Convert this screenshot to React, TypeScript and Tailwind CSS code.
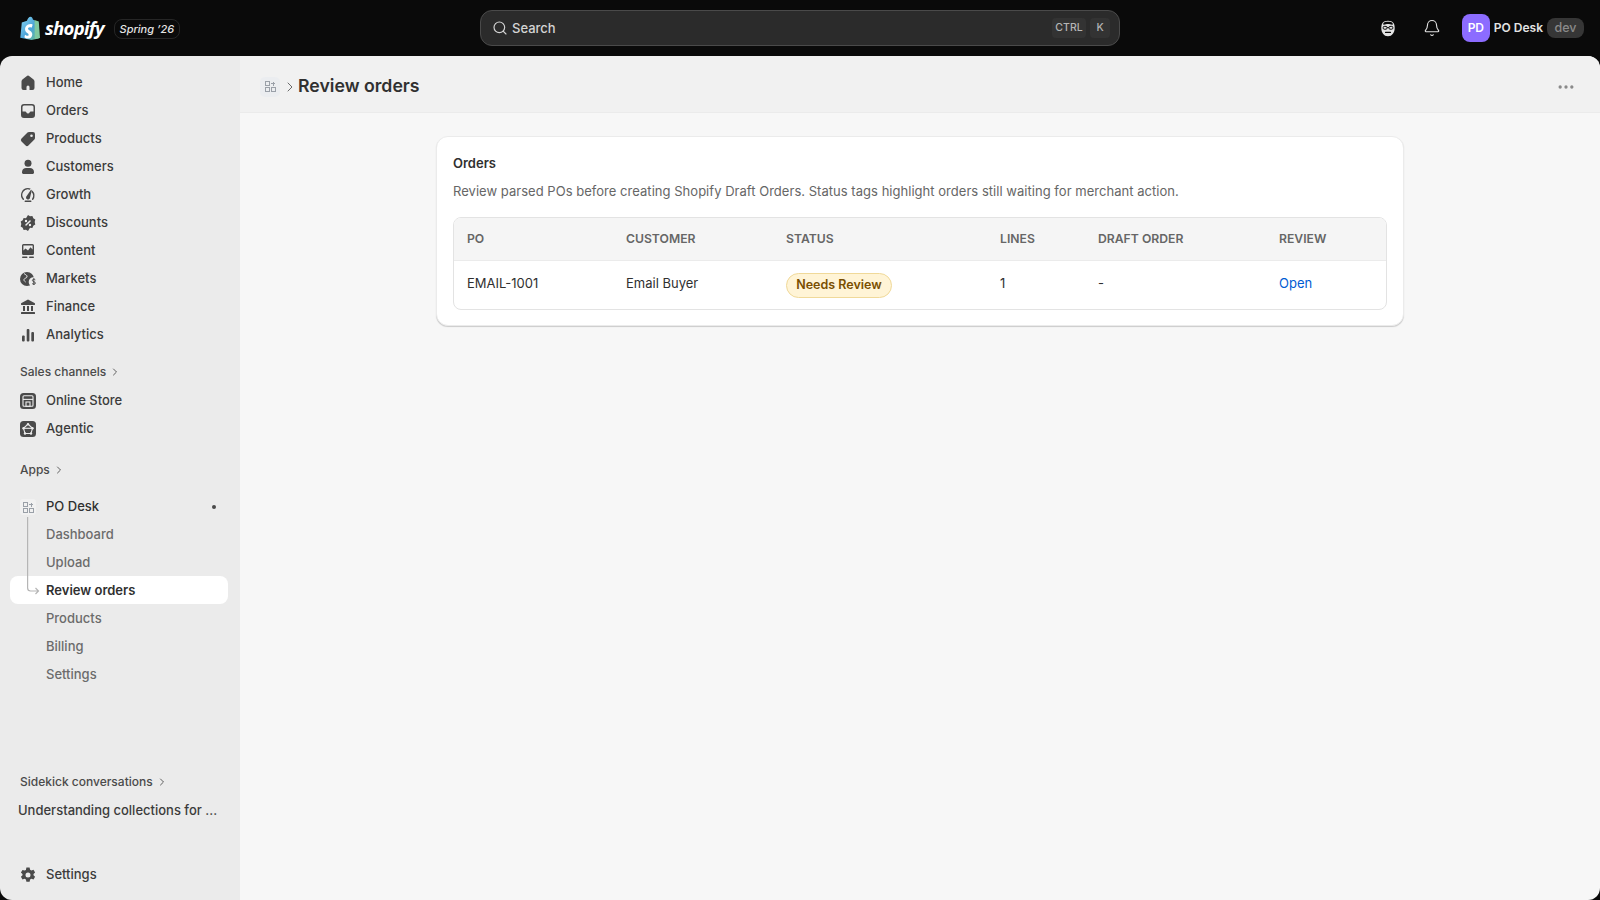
import { Bell, ChevronRight, Ellipsis, Search } from "lucide-react";
import type { ReactNode } from "react";

const Svg = ({ children }: { children: ReactNode }) => (
  <svg viewBox="0 0 20 20" className="w-5 h-5 fill-[#4a4a4a]">
    {children}
  </svg>
);

const icons: Record<string, ReactNode> = {
  home: <path d="M8.600 3.200a2.200 2.200 0 0 1 2.800 0l4.200 3.400c.6.500.9 1.200.9 1.900v6.500a2 2 0 0 1-2 2H11.500V14a1.500 1.500 0 0 0-3 0v3H5.500a2 2 0 0 1-2-2V8.500c0-.7.3-1.400.9-1.900z" />,
  orders: (
    <path
      fillRule="evenodd"
      d="M6 3h8a3 3 0 0 1 3 3v8a3 3 0 0 1-3 3H6a3 3 0 0 1-3-3V6a3 3 0 0 1 3-3m-1.500 7.500V6A1.500 1.500 0 0 1 6 4.500h8A1.500 1.500 0 0 1 15.500 6v4.500h-2.700c-.5 0-.9.3-1.100.7a1.800 1.800 0 0 1-3.400 0c-.2-.4-.6-.7-1.100-.7z"
    />
  ),
  products: (
    <path
      fillRule="evenodd"
      d="M11 3h4a2 2 0 0 1 2 2v4c0 .6-.2 1.100-.6 1.500l-6 6a2 2 0 0 1-2.800 0l-4.100-4.100a2 2 0 0 1 0-2.800l6-6C9.900 3.200 10.400 3 11 3m2.500 5a1.300 1.300 0 1 0 0-2.600 1.300 1.300 0 0 0 0 2.600"
    />
  ),
  customers: (
    <>
      <circle cx="10" cy="6.200" r="3.500" />
      <path d="M4 15c0-2.500 2-4 4-4h4c2 0 4 1.500 4 4v.5c0 .8-.7 1.500-1.500 1.500h-9C4.700 17 4 16.300 4 15.500z" />
    </>
  ),
  growth: (
    <>
      <path d="M10 3a7 7 0 0 0-5.200 11.700.75.75 0 0 0 1.100-1A5.500 5.500 0 0 1 11.900 4.800l.7-1.300A7 7 0 0 0 10 3m4.300 2.500-.8 1.400a5.500 5.500 0 0 1 .6 6.800.75.75 0 0 0 1.100 1A7 7 0 0 0 14.300 5.500" />
      <path d="M13.800 5.300a.7.7 0 0 0-1.200-.1L8.700 11a2 2 0 1 0 3.300 1.800z" />
      <rect x="6.500" y="15.500" width="7" height="1.500" rx=".75" />
    </>
  ),
  discounts: (
    <path
      fillRule="evenodd"
      d="M10 2l2 1.300 2.400-.2.9 2.200 2 1.300-.6 2.400.6 2.400-2 1.300-.9 2.200-2.400-.2L10 18l-2-1.300-2.400.2-.9-2.200-2-1.300.6-2.400-.6-2.400 2-1.300.9-2.200 2.400.2zM8 6.800a1.200 1.200 0 1 0 0 2.400 1.200 1.200 0 0 0 0-2.400m4 4a1.200 1.200 0 1 0 0 2.400 1.200 1.200 0 0 0 0-2.400m.6-3.400a.8.8 0 0 0-1.100 0l-4.100 4.100a.8.8 0 0 0 1.100 1.100l4.100-4.100a.8.8 0 0 0 0-1.100"
    />
  ),
  content: (
    <>
      <path
        fillRule="evenodd"
        d="M5.500 3h9A1.500 1.500 0 0 1 16 4.500v8a1.500 1.500 0 0 1-1.500 1.500h-9A1.500 1.500 0 0 1 4 12.500v-8A1.500 1.500 0 0 1 5.500 3m-.1 1.400v5l2.100-1.900 2.500 2 2.500-3.200 2.100 2.100v-4z"
      />
      <rect x="4" y="15.500" width="5.500" height="1.500" rx=".75" />
      <rect x="11" y="15.500" width="5" height="1.500" rx=".75" />
    </>
  ),
  markets: (
    <>
      <circle cx="9" cy="10" r="7" />
      <circle cx="15.500" cy="13" r="4.800" fill="#ebebeb" />
      <path d="M6 4.500c1.500 1.500 3.500 1.500 3 3.500-.3 1.200-2.500 1-3 2.500-.3 1 .8 2 1.500 2.500" fill="none" stroke="#ebebeb" strokeWidth="1" />
      <path d="M17.300 10.800c-.6-.7-2.900-.9-2.900.6 0 1.700 3 1 3 2.700 0 1.500-2.400 1.300-3.200.5M15.800 9.200v6.800" fill="none" stroke="#4a4a4a" strokeWidth="1" />
    </>
  ),
  finance: (
    <>
      <path d="M10 2.500 3.500 6c-.4.200-.5.500-.5.900v.6c0 .3.200.5.500.5h13c.3 0 .5-.2.500-.5v-.6c0-.4-.1-.7-.5-.9z" />
      <rect x="5" y="9" width="2" height="5" />
      <rect x="9" y="9" width="2" height="5" />
      <rect x="13" y="9" width="2" height="5" />
      <rect x="3" y="15" width="14" height="2" rx=".5" />
    </>
  ),
  analytics: (
    <>
      <rect x="4" y="10.500" width="2.700" height="6" rx="1" />
      <rect x="8.700" y="4" width="2.700" height="12.500" rx="1" />
      <rect x="13.300" y="7" width="2.700" height="9.500" rx="1" />
    </>
  ),
  store: (
    <>
      <rect x="2" y="2" width="16" height="16" rx="3.500" />
      <rect x="5" y="4.800" width="10" height="10.500" rx="1" fill="none" stroke="#ebebeb" strokeWidth="1.100" />
      <path d="M5 8.400h10" stroke="#ebebeb" strokeWidth="1.100" />
      <rect x="8" y="11" width="4" height="4.400" fill="none" stroke="#ebebeb" strokeWidth="1.100" />
    </>
  ),
  agentic: (
    <>
      <rect x="2" y="2" width="16" height="16" rx="3.500" />
      <path d="M10 5.200 14.500 9.300 13 14.500H7L5.500 9.300z" fill="none" stroke="#ebebeb" strokeWidth="1.100" />
      <path d="M6 9.300h8" stroke="#ebebeb" strokeWidth="1.100" />
      <circle cx="10" cy="5.200" r="1.200" fill="#ebebeb" />
      <circle cx="5.500" cy="9.300" r="1.200" fill="#ebebeb" />
      <circle cx="14.500" cy="9.300" r="1.200" fill="#ebebeb" />
      <circle cx="7" cy="14.500" r="1.200" fill="#ebebeb" />
      <circle cx="13" cy="14.500" r="1.200" fill="#ebebeb" />
    </>
  ),
  settings: (
    <path
      fillRule="evenodd"
      d="M8.400 2.500h3.200l.5 2.200 1.300.7 2.100-.7 1.600 2.700-1.600 1.500v1.400l1.600 1.500-1.600 2.700-2.100-.7-1.300.7-.5 2.200H8.400l-.5-2.200-1.300-.7-2.100.7-1.600-2.700 1.600-1.500V9.100L2.900 7.600l1.600-2.700 2.100.7 1.300-.7zM10 7.500a2.500 2.500 0 1 0 0 5 2.500 2.500 0 0 0 0-5"
    />
  ),
};

const AppGlyph = () => (
  <svg viewBox="0 0 12 12" className="h-[11px] w-[11px] fill-none stroke-[#9aa0a8]" strokeWidth="1.200" shapeRendering="crispEdges">
    <rect x=".6" y=".6" width="4.400" height="4.400" />
    <rect x=".6" y="7" width="4.400" height="4.400" />
    <rect x="7" y="7" width="4.400" height="4.400" />
    <path d="M9.200 .6v4.400M7 2.800h4.400" />
  </svg>
);

const NavRow = ({ icon, label }: { icon: string; label: string }) => (
  <div className="flex h-7 items-center pl-[18px] text-[13px] font-medium text-[#3b3b3b]">
    <span className="flex w-5 justify-center">
      <Svg>{icons[icon]}</Svg>
    </span>
    <span className="ml-[8px]">{label}</span>
  </div>
);

const SectionLabel = ({ label }: { label: string }) => (
  <div className="flex h-7 items-center pl-5 text-[12px] font-medium text-[#4a4a4a]">
    <span>{label}</span>
    <ChevronRight className="ml-[3px] h-3 w-3" strokeWidth={1.75} />
  </div>
);

const mainNav = [
  ["home", "Home"],
  ["orders", "Orders"],
  ["products", "Products"],
  ["customers", "Customers"],
  ["growth", "Growth"],
  ["discounts", "Discounts"],
  ["content", "Content"],
  ["markets", "Markets"],
  ["finance", "Finance"],
  ["analytics", "Analytics"],
];

const Sidebar = () => (
  <aside className="flex w-[240px] shrink-0 flex-col bg-[#ebebeb] pt-[13px] pb-[11px]">
    {mainNav.map(([icon, label]) => (
      <NavRow key={label} icon={icon} label={label} />
    ))}
    <div className="mb-[1px] mt-[9px]">
      <SectionLabel label="Sales channels" />
    </div>
    <NavRow icon="store" label="Online Store" />
    <NavRow icon="agentic" label="Agentic" />
    <div className="mt-[13px]">
      <SectionLabel label="Apps" />
    </div>

    <div className="relative mt-[9px]">
      <div className="flex h-7 items-center pl-5 text-[13px] font-medium text-[#303030]">
        <span className="flex h-4 w-4 items-center justify-center rounded-[3px] bg-[#f1f1f1]">
          <AppGlyph />
        </span>
        <span className="ml-[10px]">PO Desk</span>
        <span className="ml-auto mr-[24px] h-1 w-1 rounded-full bg-[#4a4a4a]" />
      </div>
      {["Dashboard", "Upload", "Review orders", "Products", "Billing", "Settings"].map((label) =>
        label === "Review orders" ? (
          <div
            key={label}
            className="-mt-px mb-px ml-[10px] mr-[12px] flex h-7 items-center rounded-lg bg-white pl-9 pt-[2px] text-[13px] font-semibold text-[#303030]"
          >
            {label}
          </div>
        ) : (
          <div key={label} className="flex h-7 items-center pl-[46px] text-[13px] font-medium text-[#6b6b6b]">
            {label}
          </div>
        ),
      )}
      <svg
        viewBox="0 0 16 80"
        className="absolute left-[27px] top-[24px] h-20 w-4 fill-none stroke-[#b5b5b5]"
        strokeWidth="1.200"
      >
        <path d="M.6 0v71a3 3 0 0 0 3 3H11.500M8.500 71l3 3-3 3" />
      </svg>
    </div>

    <div className="mt-auto">
      <SectionLabel label="Sidekick conversations" />
      <div className="mt-[1px] flex h-7 items-center pl-[18px] text-[13px] font-medium text-[#3b3b3b]">
        Understanding collections for ...
      </div>
    </div>
    <div className="mt-[36px]">
      <NavRow icon="settings" label="Settings" />
    </div>
  </aside>
);

const TopBar = () => (
  <header className="relative flex h-14 shrink-0 items-center bg-[#0a0a0a] pl-5 pr-4">
    <svg viewBox="0 0 20 24" className="h-6 w-5">
      <defs>
        <linearGradient id="bag" x1="0" y1="0" x2="1" y2="1">
          <stop offset="0" stopColor="#8ad6f2" />
          <stop offset="0.55" stopColor="#4aa3d8" />
          <stop offset="1" stopColor="#6cc08e" />
        </linearGradient>
      </defs>
      <path d="M1.800 6.500 7 4.800C7.500 2.500 9 .8 10.500.8c1.500 0 2.300 1.500 2.500 3l1.500.3L18.800 22.500 11.500 24 .3 21.800z" fill="url(#bag)" />
      <path d="M14.500 4.100 18.800 5.500 20 22 14.800 23z" fill="#7fc8a0" />
      <path d="M12.600 8.800l-.8 2.800s-1-.5-2.100-.4c-1.700.1-1.700 1.200-1.700 1.500.1 1.500 4 1.800 4.300 5.300.1 2.700-1.500 4.500-3.700 4.600-2.800.1-4.200-1.400-4.200-1.400l.6-2.500s1.500 1.100 2.600 1.100c.8 0 1.100-.6 1-1.100-.1-1.900-3.300-1.800-3.500-5-.2-2.700 1.600-5.400 5.500-5.600 1.100-.1 2 .7 2 .7" fill="#fff" />
    </svg>
    <span className="ml-[5px] font-['Open_Sans',sans-serif] text-[18.5px] font-bold italic leading-none tracking-[-0.7px] text-white pt-[1px]">
      shopify
    </span>
    <span className="ml-[10px] mt-[2px] flex h-[20px] w-[66px] items-center justify-center rounded-lg border border-[#262626] text-[11px] font-medium italic text-[#e3e3e3]">
      Spring ’26
    </span>

    <div className="absolute left-[480px] top-[10px] flex h-9 w-[640px] items-center rounded-xl border border-[#4a4a4a] bg-[#2b2b2b] pl-[11px] pr-[9px]">
      <Search className="h-4 w-4 text-[#d4d4d4]" strokeWidth={1.75} />
      <span className="ml-1 pt-[1px] text-[13px] font-medium text-[#d4d4d4]">Search</span>
      <span className="ml-auto flex h-5 w-[34px] items-center justify-center rounded bg-[#333333] text-[10.5px] font-medium text-[#b5b5b5]">
        CTRL
      </span>
      <span className="ml-1 flex h-5 w-5 items-center justify-center rounded bg-[#333333] text-[10.5px] font-medium text-[#b5b5b5]">
        K
      </span>
    </div>

    <div className="ml-auto flex items-center">
      <svg viewBox="0 0 16 17" className="h-[17px] w-4">
        <path d="M2.500 3C3.500 1.400 5.700.7 8 .7s4.500.7 5.500 2.300c.9 1.300 1.200 3 1.200 5 0 4.500-2.500 8.300-6.700 8.300S1.300 12.500 1.300 8c0-2 .3-3.700 1.200-5z" fill="#e3e3e3" />
        <path d="M3 4.500c1.800.5 3.200-.6 5-.6s3.200 1.100 5 .6l-.5-1.600C11.500 2 10 1.800 8 1.800s-3.500.2-4.500 1.100z" fill="#0a0a0a" />
        <rect x="3.200" y="6.400" width="3.800" height="2.800" rx="1" fill="none" stroke="#0a0a0a" strokeWidth="1" />
        <rect x="9" y="6.400" width="3.800" height="2.800" rx="1" fill="none" stroke="#0a0a0a" strokeWidth="1" />
        <path d="M7 7.500h2" stroke="#0a0a0a" strokeWidth=".8" />
        <path d="M5.500 12.400h5" stroke="#0a0a0a" strokeWidth="1.100" strokeLinecap="round" />
      </svg>
      <Bell className="ml-[27px] h-[18px] w-[18px] text-[#e3e3e3]" strokeWidth={1.5} />
      <span className="ml-[21px] flex h-7 w-7 items-center justify-center rounded-lg bg-[#8c6cff] text-[12px] font-semibold text-white">
        PD
      </span>
      <span className="ml-1 text-[12px] font-semibold text-[#e3e3e3]">PO Desk</span>
      <span className="ml-1 flex h-5 w-[37px] items-center justify-center rounded-lg bg-[#363636] text-[12.5px] font-medium text-[#8a8a8a]">
        dev
      </span>
    </div>
  </header>
);

const columns = "grid grid-cols-[159px_160px_214px_98px_181px_1fr] pl-[13px] items-center";

const Main = () => (
  <main className="flex min-w-0 flex-1 flex-col bg-[#f7f7f7]">
    <div className="flex h-[57px] items-center border-b border-[#ebebeb] bg-[#f1f1f1] pl-5 pr-6 pt-[5px]">
      <span className="flex h-5 w-5 items-center justify-center rounded-[5px] bg-[#ebedf0]">
        <AppGlyph />
      </span>
      <ChevronRight className="ml-[2px] h-4 w-4 text-[#6b6b6b]" strokeWidth={1.5} />
      <h1 className="text-[17.7px] font-semibold text-[#303030]">Review orders</h1>
      <Ellipsis className="ml-auto h-5 w-5 text-[#8a8a8a]" strokeWidth={2} />
    </div>

    <div className="mx-auto mt-[23px] w-[968px] rounded-xl border border-[#ebebeb] bg-white px-4 pt-4 pb-[15px] shadow-[0_1px_1px_rgba(0,0,0,0.18)]">
      <h2 className="text-[13px] font-semibold leading-5 text-[#303030]">Orders</h2>
      <p className="mt-2 text-[13px] leading-5 tracking-[0.03px] text-[#666666]">
        Review parsed POs before creating Shopify Draft Orders. Status tags highlight orders still waiting for merchant action.
      </p>
      <div className="mt-4 overflow-hidden rounded-lg border border-[#e3e3e3]">
        <div className={`${columns} h-[43px] border-b border-[#ebebeb] bg-[#f5f5f5] text-[12.2px] font-semibold text-[#666666]`}>
          <span>PO</span>
          <span>CUSTOMER</span>
          <span>STATUS</span>
          <span>LINES</span>
          <span>DRAFT ORDER</span>
          <span>REVIEW</span>
        </div>
        <div className={`${columns} h-[48px] pb-[2px] text-[13px] text-[#303030]`}>
          <span>EMAIL-1001</span>
          <span>Email Buyer</span>
          <span className="flex">
            <span className="mt-[3px] flex h-[25px] w-[106px] items-center justify-center rounded-full border border-[#f0d999] bg-[#fff4d6] text-[12.5px] font-semibold text-[#7a4f01]">
              Needs Review
            </span>
          </span>
          <span>1</span>
          <span>-</span>
          <span className="text-[#005bd3]">Open</span>
        </div>
      </div>
    </div>
  </main>
);

export default function App() {
  return (
    <div className="flex h-[900px] w-[1600px] flex-col overflow-hidden bg-[#0a0a0a] font-['Inter',sans-serif]">
      <TopBar />
      <div className="flex min-h-0 flex-1 overflow-hidden rounded-xl">
        <Sidebar />
        <Main />
      </div>
    </div>
  );
}
